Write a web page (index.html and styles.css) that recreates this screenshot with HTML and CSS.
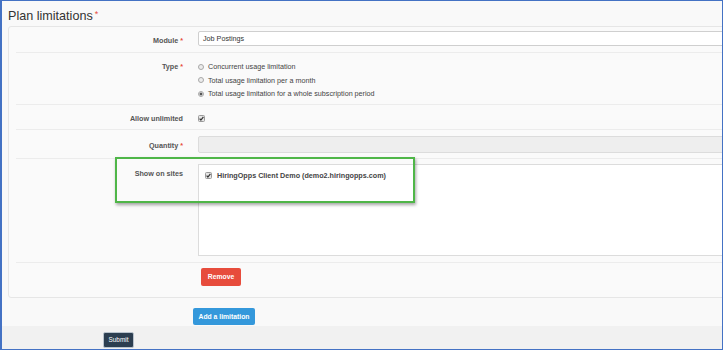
FILE: index.html
```html
<!DOCTYPE html>
<html>
<head>
<meta charset="utf-8">
<link rel="stylesheet" href="styles.css">
</head>
<body>
<div class="frame">
  <h2 class="title">Plan limitations<span class="req req-title">*</span></h2>
  <div class="panel">
    <div class="row row-module">
      <div class="label">Module <span class="req">*</span></div>
      <div class="field"><div class="input">Job Postings</div></div>
    </div>
    <div class="row row-type">
      <div class="label">Type <span class="req">*</span></div>
      <div class="field">
        <div class="opt"><span class="radio"></span>Concurrent usage limitation</div>
        <div class="opt"><span class="radio"></span>Total usage limitation per a month</div>
        <div class="opt"><span class="radio checked"></span>Total usage limitation for a whole subscription period</div>
      </div>
    </div>
    <div class="row row-allow">
      <div class="label">Allow unlimited</div>
      <div class="field">
        <div class="opt">
          <svg class="check" width="7" height="7" viewBox="0 0 7 7"><rect x="0.5" y="0.5" width="6" height="6" rx="1" fill="#e6e6e6" stroke="#9a9a9a"/><path d="M1.6 3.6 L2.9 5 L5.4 1.8" fill="none" stroke="#333" stroke-width="1.2"/></svg>
        </div>
      </div>
    </div>
    <div class="row row-qty">
      <div class="label">Quantity <span class="req">*</span></div>
      <div class="field"><div class="input input-disabled"></div></div>
    </div>
    <div class="row row-sites">
      <div class="label">Show on sites</div>
      <div class="field">
        <div class="sites-box">
          <div class="site">
            <svg class="check" width="7" height="7" viewBox="0 0 7 7"><rect x="0.5" y="0.5" width="6" height="6" rx="1" fill="#e6e6e6" stroke="#9a9a9a"/><path d="M1.6 3.6 L2.9 5 L5.4 1.8" fill="none" stroke="#333" stroke-width="1.2"/></svg>
            <span>HiringOpps Client Demo (demo2.hiringopps.com)</span>
          </div>
        </div>
      </div>
    </div>
    <div class="row row-remove">
      <div class="label"></div>
      <div class="field"><button class="btn btn-red">Remove</button></div>
    </div>
  </div>
  <div class="actions"><button class="btn btn-blue">Add a limitation</button></div>
  <div class="footer"><button class="btn btn-dark">Submit</button></div>
  <div class="highlight"></div>
</div>
</body>
</html>
```
FILE: styles.css
```css
* { box-sizing: border-box; }
body { margin: 0; font-family: "Liberation Sans", Arial, sans-serif; }

.frame {
  position: relative;
  width: 723px;
  height: 350px;
  border: 1px solid #4472c4;
  border-left-width: 2px;
  background: #f9f9f9;
  overflow: hidden;
}

.title {
  margin: 0;
  height: 25px;
  padding: 6px 0 0 6px;
  font-size: 12.6px;
  font-weight: normal;
  line-height: 15px;
  color: #333;
}
.req { color: #e74c3c; }
.req-title { font-size: 9px; margin-left: 2px; vertical-align: 3px; }

.panel {
  margin-left: 6px;
  width: 760px;
  border: 1px solid #e6e6e6;
  border-radius: 3px;
  background: #fafafa;
  padding-left: 7px;
}

.row {
  display: grid;
  grid-template-columns: 174px 1fr;
  column-gap: 8px;
  border-bottom: 1px solid #ececec;
}
.label {
  text-align: right;
  padding-right: 7px;
  font-size: 7.2px;
  font-weight: bold;
  color: #555;
  line-height: 13.5px;
}
.field { font-size: 7.2px; color: #444; line-height: 13.5px; }

.row-module { padding: 4px 0 5px; }
.row-module .label { padding-top: 2.5px; }
.row-type { padding: 7px 0 3px; }
.row-allow { padding: 7px 0 3.5px; }
.row-qty { padding: 6px 0 5px; }
.row-qty .label { padding-top: 3px; }
.row-sites { padding: 5px 0 6px; }
.row-sites .label { padding-top: 3px; }
.row-remove { padding: 5px 0 11px; border-bottom: none; }

.input {
  height: 15px;
  border: 1px solid #cfcfcf;
  border-radius: 2px;
  background: #fff;
  padding-left: 4px;
  line-height: 13px;
  color: #333;
}
.input-disabled { height: 17px; background: #eee; border-color: #dcdcdc; }

.opt { display: flex; align-items: center; gap: 4px; height: 13.5px; }
.radio {
  width: 6px;
  height: 6px;
  border-radius: 50%;
  border: 1px solid #a8a8a8;
  background: #ececec;
  flex: none;
}
.radio.checked { background: radial-gradient(circle, #555 0 1.3px, #ececec 1.7px); }
.check { display: block; flex: none; }

.sites-box {
  height: 92px;
  border: 1px solid #dcdcdc;
  background: #fff;
  padding: 5px 0 0 6px;
}
.site {
  display: flex;
  align-items: center;
  gap: 5px;
  height: 13px;
  font-weight: bold;
  color: #444;
}
.site .check { margin-top: -2px; }

.btn {
  display: flex;
  align-items: center;
  justify-content: center;
  border: none;
  border-radius: 2px;
  color: #fff;
  font-family: "Liberation Sans", Arial, sans-serif;
  font-weight: bold;
  font-size: 6.8px;
  padding: 0;
}
.btn-red { width: 40px; height: 18px; margin-left: 3px; background: #e74c3c; }
.btn-blue { width: 62px; height: 17px; margin-left: 191px; background: #3498db; }

.actions { height: 28px; padding-top: 10px; }

.footer { height: 30px; background: #f1f1f1; padding-top: 6px; }
.btn-dark {
  width: 31px;
  height: 16px;
  margin-left: 101px;
  background: #2c3e50;
  border: 1px solid #b9c3cd;
  font-weight: normal;
  font-size: 6.4px;
}

.highlight {
  position: absolute;
  left: 113px;
  top: 156px;
  width: 300px;
  height: 46px;
  border: 2px solid #4fb648;
  box-shadow: 1px 2px 3px rgba(0, 0, 0, 0.35);
}
```
